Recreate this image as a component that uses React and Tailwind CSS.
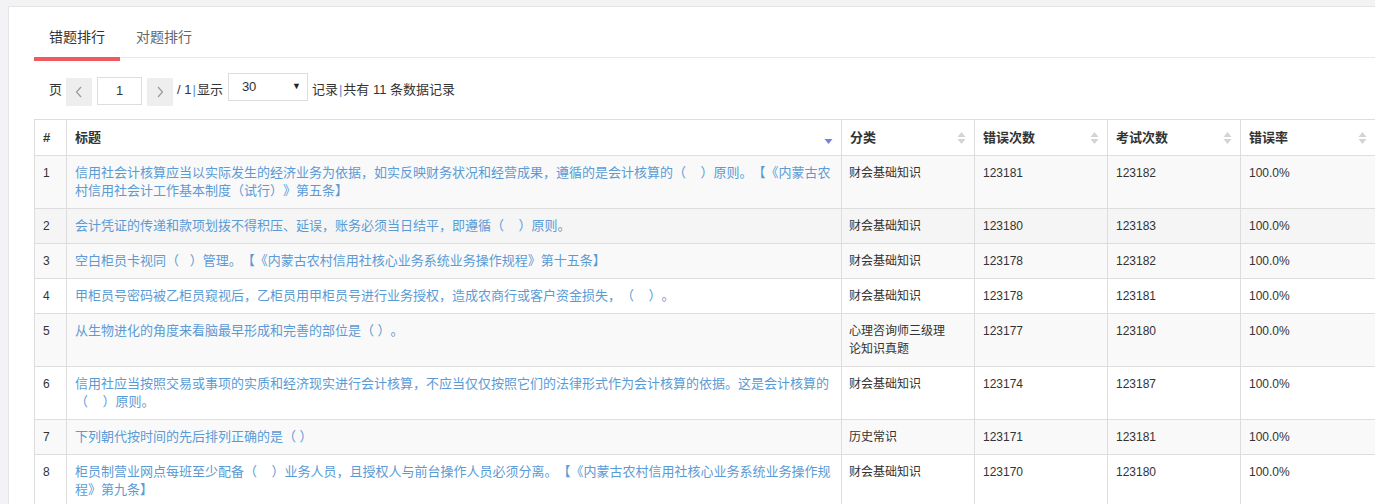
import React from "react";

const rows = [
  {
    id: 1,
    title: [
      "信用社会计核算应当以实际发生的经济业务为依据，如实反映财务状况和经营成果，遵循的是会计核算的（\u00a0\u00a0\u00a0\u00a0）原则。【《内蒙古农",
      "村信用社会计工作基本制度（试行）》第五条】",
    ],
    cat: ["财会基础知识"],
    wrong: "123181",
    total: "123182",
  },
  {
    id: 2,
    title: ["会计凭证的传递和款项划拨不得积压、延误，账务必须当日结平，即遵循（\u00a0\u00a0\u00a0\u00a0）原则。"],
    cat: ["财会基础知识"],
    wrong: "123180",
    total: "123183",
  },
  {
    id: 3,
    title: ["空白柜员卡视同（\u00a0\u00a0\u00a0）管理。【《内蒙古农村信用社核心业务系统业务操作规程》第十五条】"],
    cat: ["财会基础知识"],
    wrong: "123178",
    total: "123182",
  },
  {
    id: 4,
    title: ["甲柜员号密码被乙柜员窥视后，乙柜员用甲柜员号进行业务授权，造成农商行或客户资金损失，（\u00a0\u00a0\u00a0\u00a0）。"],
    cat: ["财会基础知识"],
    wrong: "123178",
    total: "123181",
  },
  {
    id: 5,
    title: ["从生物进化的角度来看脑最早形成和完善的部位是（ ）。"],
    cat: ["心理咨询师三级理", "论知识真题"],
    wrong: "123177",
    total: "123180",
  },
  {
    id: 6,
    title: [
      "信用社应当按照交易或事项的实质和经济现实进行会计核算，不应当仅仅按照它们的法律形式作为会计核算的依据。这是会计核算的",
      "（\u00a0\u00a0\u00a0\u00a0）原则。",
    ],
    cat: ["财会基础知识"],
    wrong: "123174",
    total: "123187",
  },
  {
    id: 7,
    title: ["下列朝代按时间的先后排列正确的是（ ）"],
    cat: ["历史常识"],
    wrong: "123171",
    total: "123181",
  },
  {
    id: 8,
    title: [
      "柜员制营业网点每班至少配备（\u00a0\u00a0\u00a0\u00a0）业务人员，且授权人与前台操作人员必须分离。【《内蒙古农村信用社核心业务系统业务操作规",
      "程》第九条】",
    ],
    cat: ["财会基础知识"],
    wrong: "123170",
    total: "123180",
  },
];

function SortIcon({ active }) {
  if (active) {
    return (
      <svg width="9" height="16" viewBox="0 0 9 16" className="shrink-0">
        <path d="M0.5 9 L8.5 9 L4.5 14 Z" fill="#7a7fd9" />
      </svg>
    );
  }
  return (
    <svg width="9" height="16" viewBox="0 0 9 16" className="shrink-0">
      <path d="M0.5 7 L8.5 7 L4.5 2 Z" fill="#d4d4d4" />
      <path d="M0.5 9 L8.5 9 L4.5 14 Z" fill="#d4d4d4" />
    </svg>
  );
}

function Th({ children, sort, active }) {
  return (
    <th className="border border-[#dddddd] px-[8px] py-[8px] text-left align-middle font-bold text-[13px] leading-[19px] text-[#333]">
      {sort ? (
        <div className="flex items-center justify-between">
          <span>{children}</span>
          <SortIcon active={active} />
        </div>
      ) : (
        children
      )}
    </th>
  );
}

export default function App() {
  return (
    <div className="h-[504px] w-[1375px] overflow-hidden bg-[#f3f3f5] pl-[8px] pt-[6px] font-['Liberation_Sans','Noto_Sans_CJK_SC',sans-serif] text-[#333] [text-spacing-trim:space-all]">
      <div className="w-[1420px] h-[520px] border border-[#e4e4e4] bg-white pl-[25px]">
        {/* Tabs */}
        <div className="flex h-[51px] border-b border-[#e8e8e8]">
          <div className="-mb-[4px] flex h-[54px] items-center border-b-4 border-[#ef5a60] px-[15px] pt-[10px] text-[14px] text-[#333]">
            错题排行
          </div>
          <div className="flex h-[50px] items-center px-[16px] pt-[10px] text-[14px] text-[#666]">
            对题排行
          </div>
        </div>

        {/* Pager */}
        <div className="mt-[15px] flex h-[33px] items-start text-[13px] text-[#333]">
          <span className="ml-[15px] mt-[8px] leading-[18px]">页</span>
          <button className="ml-[4px] mt-[5px] flex h-[28px] w-[26px] items-center justify-center bg-[#eeeeee] text-[#999]">
            <svg width="8" height="12" viewBox="0 0 8 12">
              <path d="M6 1 L1.5 6 L6 11" fill="none" stroke="#9a9a9a" strokeWidth="1.2" />
            </svg>
          </button>
          <div className="ml-[5px] mt-[4px] flex h-[28px] w-[45px] items-center justify-center border border-[#dddddd] text-[13px] text-[#333]">
            1
          </div>
          <button className="ml-[5px] mt-[5px] flex h-[28px] w-[26px] items-center justify-center bg-[#eeeeee]">
            <svg width="8" height="12" viewBox="0 0 8 12">
              <path d="M2 1 L6.5 6 L2 11" fill="none" stroke="#9a9a9a" strokeWidth="1.2" />
            </svg>
          </button>
          <span className="ml-[4px] mt-[8px] leading-[18px]">
            / 1<span className="px-[1px] text-[#5b8fd0]">|</span>显示
          </span>
          <div className="ml-[5px] flex h-[28px] w-[80px] items-center justify-between border border-[#dddddd] pl-[13px] pr-[6px]">
            <span>30</span>
            <span className="text-[9px] text-[#222]">▼</span>
          </div>
          <span className="ml-[4px] mt-[8px] leading-[18px]">
            记录<span className="px-[1px] text-[#5b8fd0]">|</span>共有 11 条数据记录
          </span>
        </div>

        {/* Table */}
        <table className="mt-[13px] w-[1341px] table-fixed border-collapse">
          <colgroup>
            <col className="w-[32px]" />
            <col className="w-[775px]" />
            <col className="w-[133px]" />
            <col className="w-[133px]" />
            <col className="w-[133px]" />
            <col className="w-[135px]" />
          </colgroup>
          <thead>
            <tr className="bg-white">
              <Th>#</Th>
              <Th sort active>标题</Th>
              <Th sort>分类</Th>
              <Th sort>错误次数</Th>
              <Th sort>考试次数</Th>
              <Th sort>错误率</Th>
            </tr>
          </thead>
          <tbody>
            {rows.map((r) => (
              <tr
                key={r.id}
                className={
                  r.id === 2
                    ? "bg-[#f5f5f5]"
                    : r.id % 2 === 1
                    ? "bg-[#f9f9f9]"
                    : "bg-white"
                }
              >
                <td className="border border-[#dddddd] px-[8px] py-[8px] align-top text-[12px] leading-[18px]">
                  {r.id}
                </td>
                <td className="border border-[#dddddd] px-[8px] py-[8px] align-top text-[13px] leading-[18px] text-[#5b9bd5]">
                  {r.title.map((line, i) => (
                    <div key={i} className="whitespace-nowrap">
                      {line}
                    </div>
                  ))}
                </td>
                <td className="border border-[#dddddd] px-[7px] py-[8px] align-top text-[12px] leading-[18px]">
                  {r.cat.map((line, i) => (
                    <div key={i} className="whitespace-nowrap">
                      {line}
                    </div>
                  ))}
                </td>
                <td className="border border-[#dddddd] px-[8px] py-[8px] align-top text-[12px] leading-[18px]">
                  {r.wrong}
                </td>
                <td className="border border-[#dddddd] px-[8px] py-[8px] align-top text-[12px] leading-[18px]">
                  {r.total}
                </td>
                <td className="border border-[#dddddd] px-[8px] py-[8px] align-top text-[12px] leading-[18px]">
                  100.0%
                </td>
              </tr>
            ))}
          </tbody>
        </table>
      </div>
    </div>
  );
}
